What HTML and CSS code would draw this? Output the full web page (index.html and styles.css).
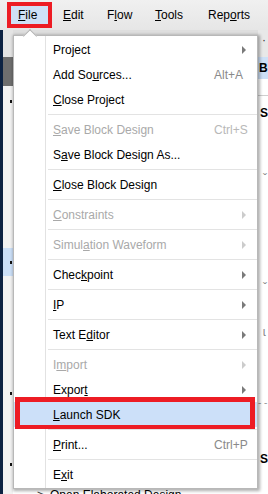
FILE: index.html
```html
<!DOCTYPE html>
<html>
<head>
<meta charset="utf-8">
<link rel="stylesheet" href="styles.css">
</head>
<body>
<div class="screen">
  <div class="menubar">
    <span class="mb-file"><u>F</u>ile</span>
    <span class="mb-item w-edit"><u>E</u>dit</span>
    <span class="mb-item w-flow">F<u>l</u>ow</span>
    <span class="mb-item w-tools"><u>T</u>ools</span>
    <span class="mb-item">Rep<u>o</u>rts</span>
  </div>
  <div class="workspace">
    <div class="left-pane">
      <div class="lp-top"></div>
      <div class="lp-dark"></div>
      <div class="lp-gap14"></div>
      <div class="lp-dotrow"><i class="dot"></i></div>
      <div class="lp-gap145"></div>
      <div class="lp-sel"><i class="dot"></i></div>
      <div class="lp-gap116"></div>
      <div class="lp-dotrow"><i class="dot"></i></div>
      <div class="lp-gap68"></div>
      <div class="lp-dotrow"><i class="dot"></i></div>
    </div>
    <div class="center">
      <div class="c-top"></div>
      <div class="c-body"></div>
      <div class="flow-row"><span class="chev">&gt;</span>Open Elaborated Design</div>
    </div>
    <div class="right-pane">
      <div class="rp-top"><span class="tick">·</span></div>
      <div class="rp-sel">Bl</div>
      <div class="rp-white"></div>
      <div class="rp-head">S</div>
      <div class="rp-gap"></div>
      <div class="rp-mark">ˇ</div>
      <div class="rp-gap2"></div>
      <div class="rp-mark">ˇ</div>
      <div class="rp-gap3"></div>
      <div class="rp-mark">ɩ</div>
      <div class="rp-gap4"></div>
      <div class="rp-dash">- -</div>
      <div class="rp-gap5"></div>
      <div class="rp-head2">S</div>
    </div>
  </div>

  <div class="menu">
    <div class="mi"><span class="lbl">Pro<u>j</u>ect</span><i class="arr"></i></div>
    <div class="mi"><span class="lbl">Add So<u>u</u>rces...</span><span class="key">Alt+A</span></div>
    <div class="mi"><span class="lbl"><u>C</u>lose Project</span></div>
    <div class="sep"></div>
    <div class="mi dis"><span class="lbl"><u>S</u>ave Block Design</span><span class="key">Ctrl+S</span></div>
    <div class="mi"><span class="lbl">S<u>a</u>ve Block Design As...</span></div>
    <div class="sep"></div>
    <div class="mi"><span class="lbl"><u>C</u>lose Block Design</span></div>
    <div class="sep"></div>
    <div class="mi dis"><span class="lbl"><u>C</u>onstraints</span><i class="arr"></i></div>
    <div class="sep"></div>
    <div class="mi dis"><span class="lbl">Simul<u>a</u>tion Waveform</span><i class="arr"></i></div>
    <div class="sep"></div>
    <div class="mi"><span class="lbl">Chec<u>k</u>point</span><i class="arr"></i></div>
    <div class="sep"></div>
    <div class="mi"><span class="lbl"><u>I</u>P</span><i class="arr"></i></div>
    <div class="sep"></div>
    <div class="mi"><span class="lbl">Text E<u>d</u>itor</span><i class="arr"></i></div>
    <div class="sep"></div>
    <div class="mi dis"><span class="lbl">I<u>m</u>port</span><i class="arr"></i></div>
    <div class="mi"><span class="lbl">Expor<u>t</u></span><i class="arr"></i></div>
    <div class="mi hl"><span class="lbl"><u>L</u>aunch SDK</span></div>
    <div class="sep"></div>
    <div class="mi"><span class="lbl"><u>P</u>rint...</span><span class="key">Ctrl+P</span></div>
    <div class="sep"></div>
    <div class="mi"><span class="lbl">E<u>x</u>it</span></div>
  </div>
</div>
</body>
</html>
```

FILE: styles.css
```css
html, body {
  margin: 0;
  padding: 0;
  background: #ffffff;
}
body {
  font-family: "Liberation Sans", Arial, sans-serif;
  font-size: 12px;
  color: #000;
}
u {
  text-decoration: underline;
  text-underline-offset: 1px;
}
.screen {
  position: relative;
  width: 268px;
  height: 494px;
  overflow: hidden;
  display: flex;
  flex-direction: column;
  background: #ffffff;
}

/* menubar */
.menubar {
  height: 30px;
  flex: 0 0 30px;
  display: flex;
  align-items: center;
  padding-left: 7px;
  background: linear-gradient(#f0f0f0, #e6e6e6);
  box-sizing: border-box;
}
.mb-file {
  box-sizing: border-box;
  width: 45px;
  height: 26px;
  border: 4px solid #ed1c24;
  background: #cfe0f6;
  padding-left: 7px;
  line-height: 18px;
  margin-right: 11px;
}
.mb-item {
  line-height: 18px;
}
.w-edit { width: 44px; }
.w-flow { width: 48px; }
.w-tools { width: 53px; }

/* background workspace */
.workspace {
  flex: 1;
  display: grid;
  grid-template-columns: 13px 1fr 10px;
  min-height: 0;
}
.left-pane {
  background: #f2f2f2;
  border-left: 3px solid #0c2242;
  display: flex;
  flex-direction: column;
}
.lp-top { height: 27px; background: #e4e4e4; }
.lp-dark { height: 29px; background: #6e6e6e; }
.lp-gap14 { height: 14px; }
.lp-gap145 { height: 145px; }
.lp-gap116 { height: 116px; }
.lp-gap68 { height: 68px; }
.lp-dotrow {
  height: 3px;
  display: flex;
  justify-content: flex-end;
}
.lp-sel {
  height: 28px;
  background: #cbdff7;
  display: flex;
  align-items: center;
  justify-content: flex-end;
}
.dot {
  width: 2px;
  height: 3px;
  background: #111;
  margin-right: 1px;
}
.center {
  display: flex;
  flex-direction: column;
  background: #ffffff;
}
.c-top {
  height: 5px;
  background: #dedede;
}
.c-body { flex: 1; }
.flow-row {
  height: 9px;
  overflow: hidden;
  line-height: 20px;
  padding-left: 24px;
  white-space: nowrap;
  color: #000;
}
.chev {
  display: inline-block;
  width: 13px;
  color: #444;
}
.right-pane {
  background: #ffffff;
  display: flex;
  flex-direction: column;
  overflow: hidden;
  white-space: nowrap;
}
.rp-top {
  height: 27px;
  background: #e8e8e8;
  color: #333;
  font-size: 12px;
  line-height: 20px;
  padding-left: 4px;
}
.rp-sel {
  height: 22px;
  background: #cde0f7;
  line-height: 22px;
  font-weight: bold;
  padding-left: 1px;
}
.rp-white {
  height: 16px;
  border-bottom: 1px solid #cfcfcf;
}
.rp-head {
  height: 34px;
  line-height: 34px;
  font-weight: bold;
  padding-left: 2px;
}
.rp-gap { height: 42px; }
.rp-gap2 { height: 95px; }
.rp-gap3 { height: 30px; }
.rp-gap4 { height: 58px; }
.rp-gap5 { height: 40px; }
.rp-mark {
  height: 14px;
  line-height: 14px;
  color: #8a8a8a;
  padding-left: 5px;
}
.rp-dash {
  height: 12px;
  line-height: 12px;
  color: #999;
  font-size: 10px;
}
.rp-head2 {
  height: 20px;
  line-height: 20px;
  font-weight: bold;
  padding-left: 2px;
}

/* dropdown menu */
.menu {
  position: absolute;
  left: 13px;
  top: 35px;
  width: 245px;
  height: 454px;
  box-sizing: border-box;
  border: 1px solid #b8b8b8;
  padding: 1px 0;
  background-color: #ffffff;
  background-image: linear-gradient(to right, transparent 31px, #e2e2e2 31px, #e2e2e2 32px, transparent 32px);
  box-shadow: 1px 1px 3px 1px rgba(0, 0, 0, 0.32);
}
.menu::before {
  content: "";
  position: absolute;
  left: 11px;
  top: -5px;
  width: 9px;
  height: 9px;
  background: #ffffff;
  border-top: 1px solid #b0b0b0;
  border-left: 1px solid #b0b0b0;
  transform: rotate(45deg);
}
.mi {
  position: relative;
  height: 25px;
  display: flex;
  align-items: center;
  padding-left: 39px;
  white-space: nowrap;
}
.lbl {
  width: 161px;
  flex: 0 0 161px;
}
.key {
  color: #8a8a8a;
}
.arr {
  margin-left: auto;
  margin-right: 11px;
  width: 0;
  height: 0;
  border-left: 4px solid #7a7a7a;
  border-top: 4px solid transparent;
  border-bottom: 4px solid transparent;
}
.dis { color: #a9a9a9; }
.dis .key { color: #b8b8b8; }
.dis .arr { border-left-color: #cccccc; }
.hl {
  background: #cce0f9;
}
.hl::after {
  content: "";
  position: absolute;
  left: 1px;
  right: 2px;
  top: -5px;
  bottom: -2px;
  border: 5px solid #ed1c24;
  border-bottom-width: 4px;
}
.sep {
  height: 5px;
  background: linear-gradient(#e3e3e3, #e3e3e3) no-repeat 34px 2px / calc(100% - 34px) 1px;
}
```
